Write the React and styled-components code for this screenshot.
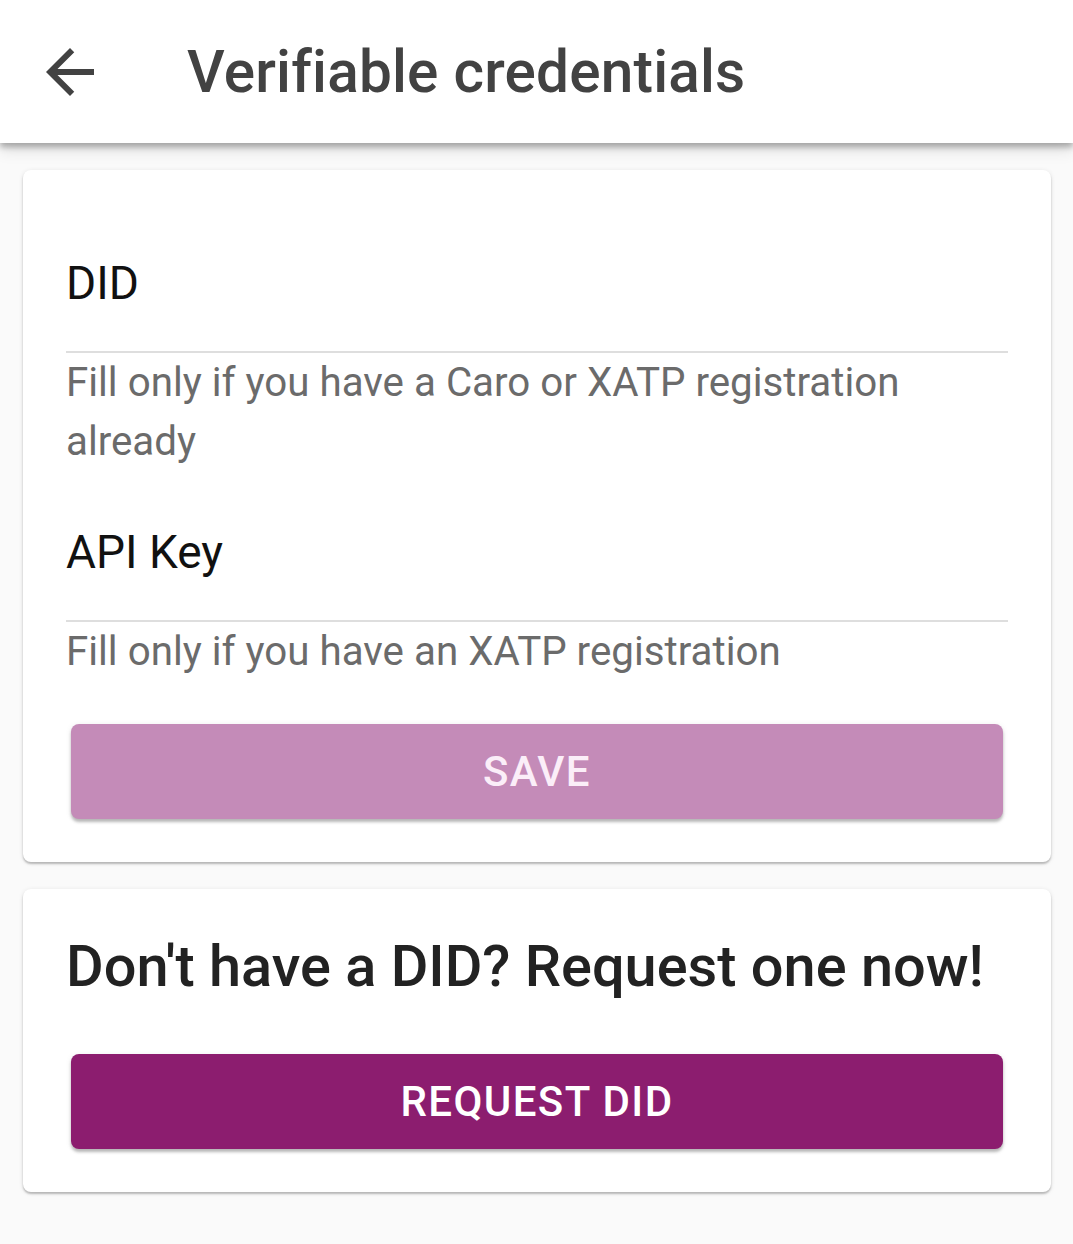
import React from 'react';
import styled, { createGlobalStyle } from 'styled-components';

const GlobalStyle = createGlobalStyle`
  html, body {
    margin: 0;
    padding: 0;
    background: #fafafa;
    font-family: Roboto, "Noto Sans", "Liberation Sans", sans-serif;
  }
  * { box-sizing: border-box; }
`;

const Page = styled.div`
  width: 1073px;
  min-height: 1244px;
  background: #fafafa;
`;

const TopBar = styled.header`
  height: 143px;
  background: #fff;
  display: flex;
  align-items: center;
  box-shadow: 0 4px 6px rgba(0, 0, 0, 0.28), 0 8px 14px rgba(0, 0, 0, 0.1);
  position: relative;
  z-index: 1;
`;

const BackButton = styled.button`
  width: 72px;
  height: 72px;
  margin-left: 34px;
  padding: 0;
  border: 0;
  background: none;
  display: flex;
  align-items: center;
  justify-content: center;
  svg { display: block; }
`;

const Title = styled.h1`
  margin: 0 0 0 81px;
  font-size: 58.5px;
  font-weight: 500;
  color: #424242;
  letter-spacing: 0.2px;
`;

const Content = styled.main`
  display: flex;
  flex-direction: column;
  gap: 27px;
  padding: 27px 22px 40px 23px;
`;

const Card = styled.section`
  background: #fff;
  border-radius: 8px;
  box-shadow: 0 2px 2px rgba(0, 0, 0, 0.22), 0 1px 5px rgba(0, 0, 0, 0.1);
  padding: ${p => p.$top}px 43px 43px 43px;
  display: flex;
  flex-direction: column;
`;

const Field = styled.div`
  display: flex;
  flex-direction: column;
  & + & { margin-top: 57px; }
`;

const Input = styled.div`
  font-size: 46px;
  line-height: 48px;
  color: #111;
  padding-bottom: 44px;
  border-bottom: 2px solid #dedede;
`;

const Helper = styled.div`
  font-size: 40.3px;
  line-height: 59px;
  color: #6b6b6b;
`;

const Button = styled.button`
  margin: ${p => p.$gap}px 5px 0 5px;
  height: 95px;
  border: 0;
  border-radius: 8px;
  background: ${p => (p.$disabled ? '#c48bb8' : '#8c1d6f')};
  color: ${p => (p.$disabled ? '#fbeef8' : '#fff')};
  font-family: Roboto, "Noto Sans", sans-serif;
  font-size: 42px;
  font-weight: 500;
  letter-spacing: 1.4px;
  text-transform: uppercase;
  box-shadow: 0 3px 3px rgba(0, 0, 0, 0.25), 0 1px 6px rgba(0, 0, 0, 0.08);
`;

const Heading = styled.h2`
  margin: 0;
  font-size: 57.7px;
  line-height: 60px;
  font-weight: 500;
  color: #222;
`;

const ArrowBack = () => (
  <svg width="72" height="72" viewBox="0 0 24 24" fill="#424242">
    <path d="M20 11H7.83l5.59-5.59L12 4l-8 8 8 8 1.41-1.41L7.83 13H20v-2z" />
  </svg>
);

export default function App() {
  return (
    <Page>
      <GlobalStyle />
      <TopBar>
        <BackButton aria-label="back">
          <ArrowBack />
        </BackButton>
        <Title>Verifiable credentials</Title>
      </TopBar>
      <Content>
        <Card $top={89}>
          <Field>
            <Input>DID</Input>
            <Helper>Fill only if you have a Caro or XATP registration already</Helper>
          </Field>
          <Field>
            <Input>API Key</Input>
            <Helper>Fill only if you have an XATP registration</Helper>
          </Field>
          <Button $disabled $gap={43}>Save</Button>
        </Card>
        <Card $top={47}>
          <Heading>Don't have a DID? Request one now!</Heading>
          <Button $gap={58}>Request DID</Button>
        </Card>
      </Content>
    </Page>
  );
}
